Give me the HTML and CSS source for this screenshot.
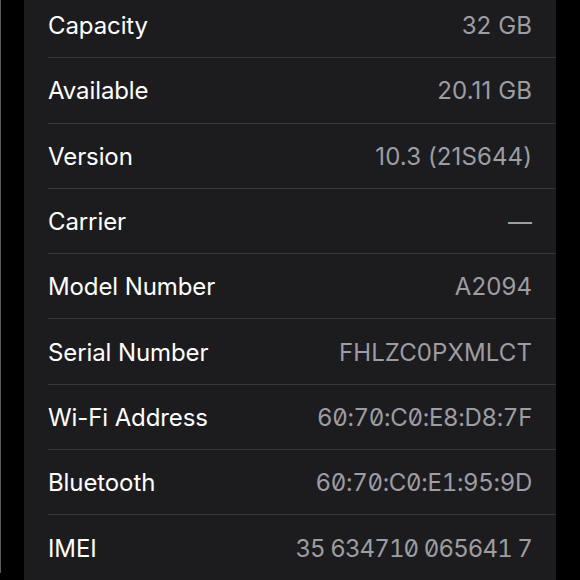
FILE: index.html
```html
<!DOCTYPE html>
<html lang="en">
<head>
    <meta charset="UTF-8">
    <meta name="viewport" content="width=device-width, initial-scale=1.0">
    <title>About</title>
    <link rel="stylesheet" href="styles.css">
</head>
<body>
    <div class="screen">
        <div class="group">
            <div class="row"><div class="row-inner"><span class="label">Capacity</span><span class="value">32 GB</span></div></div>
            <div class="row"><div class="row-inner"><span class="label">Available</span><span class="value">20.11 GB</span></div></div>
            <div class="row"><div class="row-inner"><span class="label">Version</span><span class="value">10.3 (21S644)</span></div></div>
            <div class="row"><div class="row-inner"><span class="label">Carrier</span><span class="value">—</span></div></div>
            <div class="row"><div class="row-inner"><span class="label">Model Number</span><span class="value">A2094</span></div></div>
            <div class="row"><div class="row-inner"><span class="label">Serial Number</span><span class="value">FHLZC0PXMLCT</span></div></div>
            <div class="row"><div class="row-inner"><span class="label">Wi-Fi Address</span><span class="value mono">60:70:C0:E8:D8:7F</span></div></div>
            <div class="row"><div class="row-inner"><span class="label">Bluetooth</span><span class="value mono">60:70:C0:E1:95:9D</span></div></div>
            <div class="row"><div class="row-inner"><span class="label">IMEI</span><span class="value mono tight">35 634710 065641 7</span></div></div>
        </div>
    </div>
</body>
</html>
```

FILE: styles.css
```css
html, body {
    margin: 0;
    background: #000;
    height: 100%;
    overflow: hidden;
}
body {
    font-family: Inter, "Noto Sans", sans-serif;
    color: #fff;
}
.screen {
    border-left: 1px solid #5c5c5c;
    padding: 0 24px 0 23px;
    height: 100%;
}
.group {
    background: #1c1c1e;
    margin-top: -7px;
}
.row {
    padding-left: 24px;
}
.row-inner {
    display: flex;
    justify-content: space-between;
    align-items: center;
    height: 63.3px;
    padding-right: 24px;
    padding-top: 1px;
    box-sizing: content-box;
    border-bottom: 1px solid #38383a;
}
.label {
    font-size: 24px;
    letter-spacing: -0.1px;
}
.value {
    font-size: 24px;
    color: #9d9da3;
    letter-spacing: 0.1px;
}
.mono {
    font-feature-settings: "tnum", "zero";
    letter-spacing: -0.3px;
}
.tight {
    letter-spacing: -0.9px;
}
```
